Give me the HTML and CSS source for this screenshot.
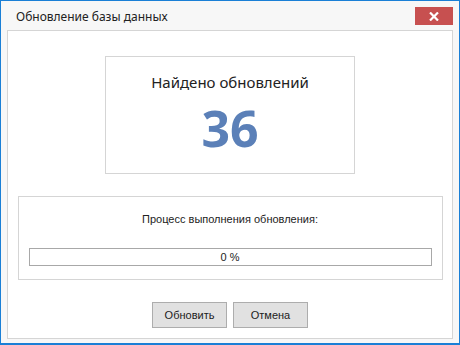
FILE: index.html
```html
<!DOCTYPE html>
<html>

<head>
  <title>Обновление базы данных</title>
  <link rel="stylesheet" href="styles.css">
</head>

<body>
  <div class="window">
    <div class="title-bar">
      <span class="title">Обновление базы данных</span>
      <button class="close-btn">
        <svg width="10" height="9" viewBox="0 0 10 9">
          <path d="M1 0.5 L9 8.5 M9 0.5 L1 8.5" stroke="#fff" stroke-width="2.2" />
        </svg>
      </button>
    </div>

    <div class="panel">
      <div class="found-box">
        <p class="found-label">Найдено обновлений</p>
        <p class="found-count">36</p>
      </div>

      <div class="progress-box">
        <p class="progress-label">Процесс выполнения обновления:</p>
        <div class="progress-bar">0 %</div>
      </div>

      <div class="buttons">
        <button class="btn">Обновить</button>
        <button class="btn">Отмена</button>
      </div>
    </div>
  </div>
</body>

</html>
```

FILE: styles.css
```css
body {
  margin: 0;
  font-family: "Liberation Sans", Arial, sans-serif;
}

.window {
  width: 460px;
  height: 345px;
  box-sizing: border-box;
  border: 1px solid #1a7fd6;
  border-bottom-width: 2px;
  background-color: #f7f7f7;
  display: flex;
  flex-direction: column;
}

.title-bar {
  height: 29px;
  display: flex;
  align-items: flex-start;
  justify-content: space-between;
}

.title {
  font-family: "Noto Sans", sans-serif;
  font-size: 12px;
  color: #222;
  margin: 7px 0 0 15px;
}

.close-btn {
  width: 38px;
  height: 18px;
  margin: 6px 6px 0 0;
  border: none;
  padding: 0;
  background-color: #c75050;
  display: flex;
  align-items: center;
  justify-content: center;
}

.panel {
  margin: 0 6px;
  height: 309px;
  box-sizing: border-box;
  border: 1px solid #d5d5d5;
  background-color: #fff;
  display: flex;
  flex-direction: column;
  align-items: center;
  padding-top: 25px;
}

.found-box {
  width: 250px;
  height: 118px;
  box-sizing: border-box;
  border: 1px solid #d5d5d5;
  text-align: center;
}

.found-label {
  margin: 15px 0 0;
  font-family: "Noto Sans", sans-serif;
  font-size: 15px;
  color: #222;
}

.found-count {
  margin: 8px 0 0;
  font-family: "Noto Sans", sans-serif;
  font-weight: bold;
  font-size: 50px;
  line-height: 56px;
  color: #5b80b8;
}

.progress-box {
  width: 425px;
  height: 84px;
  box-sizing: border-box;
  margin-top: 22px;
  border: 1px solid #d5d5d5;
  padding: 0 10px;
  text-align: center;
}

.progress-label {
  margin: 16px 0 0;
  font-size: 11px;
  color: #222;
}

.progress-bar {
  margin-top: 23px;
  height: 18px;
  box-sizing: border-box;
  border: 1px solid #a8a8a8;
  font-size: 11px;
  line-height: 16px;
  color: #222;
}

.buttons {
  margin-top: 22px;
  display: flex;
  gap: 6px;
}

.btn {
  width: 75px;
  height: 26px;
  border: 1px solid #adadad;
  background-color: #e1e1e1;
  font-family: "Liberation Sans", Arial, sans-serif;
  font-size: 11px;
  color: #222;
}
```
